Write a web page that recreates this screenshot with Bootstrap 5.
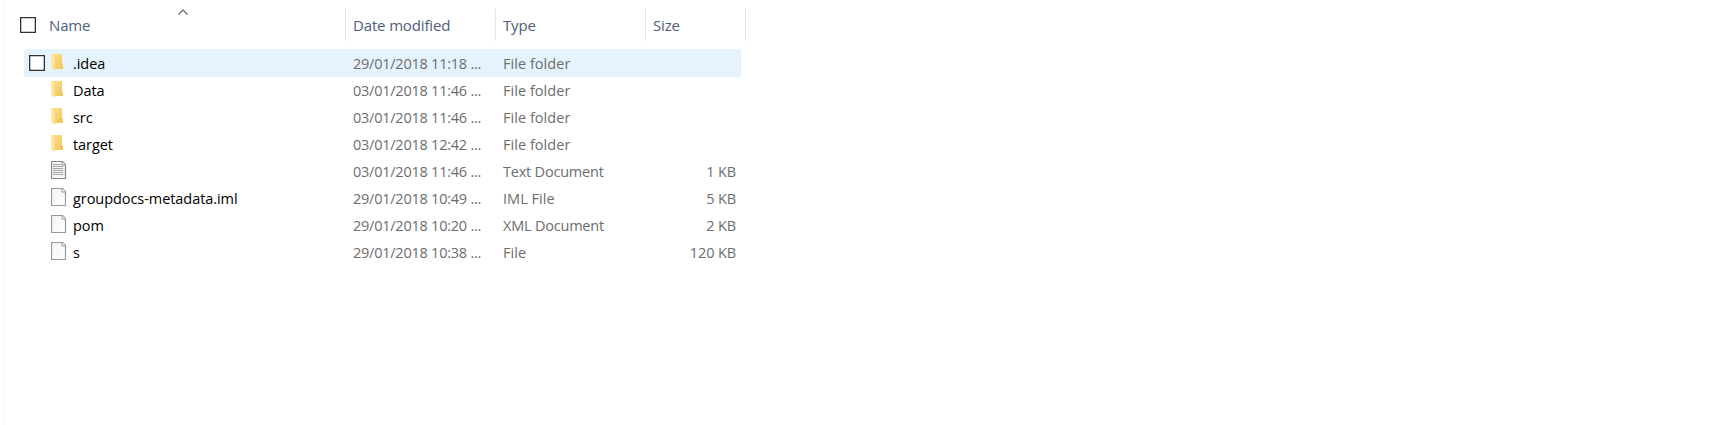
<!DOCTYPE html>
<html lang="en">
<head>
<meta charset="utf-8">
<meta name="viewport" content="width=device-width, initial-scale=1">
<title>File list</title>
<link href="https://cdn.jsdelivr.net/npm/bootstrap@5.3.0/dist/css/bootstrap.min.css" rel="stylesheet">
<style>
body{font-family:"Open Sans","Noto Sans",sans-serif;font-size:14.5px;color:#6d6d6d;background:#fff;overflow:hidden}
.file-pane{margin-left:3px;border-left:1px solid #f5f5f5;padding-top:9px;height:425px}
.file-pane .head-line{height:32px;width:742px;color:#4c607a;font-size:15px;letter-spacing:-.15px;margin-bottom:8px}
.head-line>div{border-right:1px solid #e5e5e5;height:32px;padding-left:7px;line-height:33px}
.col-name{width:342px}.col-date,.col-type{width:150px}.col-size{width:100px}
.head-line .col-name{padding-left:16px}
.check-box{width:16px;height:16px;border:1px solid #333;background:#fff;flex:none;box-shadow:inset 0 0 0 .3px #333}
.head-line .check-box{margin-right:13px;margin-top:-1px}
.sort-mark{left:173.500px;top:1px}
.file-row{width:717px;height:27px;margin-left:20px;line-height:30px}
.file-row.hot{height:28px;background:#e5f3ff;margin-bottom:-1px}
.file-row>*{height:27px}
.file-row .col-name{width:322px;color:#000;padding-left:5px;letter-spacing:-.06px}
.file-row .check-box{height:16px;visibility:hidden;margin-top:6px}
.file-row.hot .check-box{visibility:visible}
.file-row svg{margin:4px 6px 0;width:16px;height:19px;flex:none;align-self:flex-start}
.file-row .col-date,.file-row .col-type{padding-left:7px}
.file-row .col-date{letter-spacing:-.24px}
.file-row .col-type{letter-spacing:.04px}
.file-row .tight{letter-spacing:-.21px}
.file-row .col-size{width:95px;padding-right:5px;letter-spacing:-.12px}
</style>
</head>
<body>
<svg width="0" height="0" class="position-absolute" aria-hidden="true">
<defs>
<linearGradient id="gold" x1="0" y1="0" x2="1" y2="1"><stop stop-color="#ffe08b"/><stop offset="1" stop-color="#efc45c"/></linearGradient>
<linearGradient id="sheet" x1="0" y1="0" x2="1" y2="1"><stop stop-color="#f2f3f4"/><stop offset="1" stop-color="#fff"/></linearGradient>
<symbol id="folder" viewBox="0 0 16 19"><path d="M1 1h10v10l1 1v4H2z" fill="url(#gold)"/><path d="M0 1l4 3v14L0 15.500z" fill="#ffe7a2"/><path d="M3.600 4v13.500" stroke="#f3d27c" stroke-width=".7"/></symbol>
<symbol id="blank" viewBox="0 0 16 19"><path d="M.5.5H11.500L14.500 3.500v14H.5z" fill="url(#sheet)" stroke="#999" stroke-width="1.200"/><path d="M11 .5v3.500h3.500" fill="#fff" stroke="#999"/></symbol>
<symbol id="textdoc" viewBox="0 0 16 19"><path d="M.5.5H11.500L14.500 3.500v14H.5z" fill="#f7f7f7" stroke="#888" stroke-width="1.200"/><path d="M11 .5v3.500h3.500" fill="#fff" stroke="#888"/><path d="M2 3.500h7.500M2 5.500h10M2 7.500h10M2 9.500h10M2 11.500h10M2 13.500h10" stroke="#a3a3a3"/></symbol>
</defs>
</svg>
<main class="file-pane position-relative">
<div class="head-line d-flex">
<div class="col-name d-flex align-items-center"><span class="check-box"></span>Name</div>
<div class="col-date">Date modified</div><div class="col-type">Type</div><div class="col-size">Size</div>
</div>
<svg class="sort-mark position-absolute" width="10" height="15" fill="none" stroke="#606060" stroke-width="1.100"><path d="M.5 13.500L5 9l4.500 4.500"/></svg>
<div class="file-row hot d-flex"><div class="col-name d-flex"><span class="check-box"></span><svg><use href="#folder"/></svg>.idea</div><div class="col-date">29/01/2018 11:18 ...</div><div class="col-type">File folder</div><div class="col-size"></div></div>
<div class="file-row d-flex"><div class="col-name d-flex"><span class="check-box"></span><svg><use href="#folder"/></svg>Data</div><div class="col-date">03/01/2018 11:46 ...</div><div class="col-type">File folder</div><div class="col-size"></div></div>
<div class="file-row d-flex"><div class="col-name d-flex"><span class="check-box"></span><svg><use href="#folder"/></svg>src</div><div class="col-date">03/01/2018 11:46 ...</div><div class="col-type">File folder</div><div class="col-size"></div></div>
<div class="file-row d-flex"><div class="col-name d-flex"><span class="check-box"></span><svg><use href="#folder"/></svg>target</div><div class="col-date">03/01/2018 12:42 ...</div><div class="col-type">File folder</div><div class="col-size"></div></div>
<div class="file-row d-flex"><div class="col-name d-flex"><span class="check-box"></span><svg><use href="#textdoc"/></svg></div><div class="col-date">03/01/2018 11:46 ...</div><div class="col-type tight">Text Document</div><div class="col-size text-end">1 KB</div></div>
<div class="file-row d-flex"><div class="col-name d-flex"><span class="check-box"></span><svg><use href="#blank"/></svg>groupdocs-metadata.iml</div><div class="col-date">29/01/2018 10:49 ...</div><div class="col-type">IML File</div><div class="col-size text-end">5 KB</div></div>
<div class="file-row d-flex"><div class="col-name d-flex"><span class="check-box"></span><svg><use href="#blank"/></svg>pom</div><div class="col-date">29/01/2018 10:20 ...</div><div class="col-type tight">XML Document</div><div class="col-size text-end">2 KB</div></div>
<div class="file-row d-flex"><div class="col-name d-flex"><span class="check-box"></span><svg><use href="#blank"/></svg>s</div><div class="col-date">29/01/2018 10:38 ...</div><div class="col-type">File</div><div class="col-size text-end">120 KB</div></div>
</main>
<script src="https://cdn.jsdelivr.net/npm/bootstrap@5.3.0/dist/js/bootstrap.bundle.min.js"></script>
</body>
</html>
